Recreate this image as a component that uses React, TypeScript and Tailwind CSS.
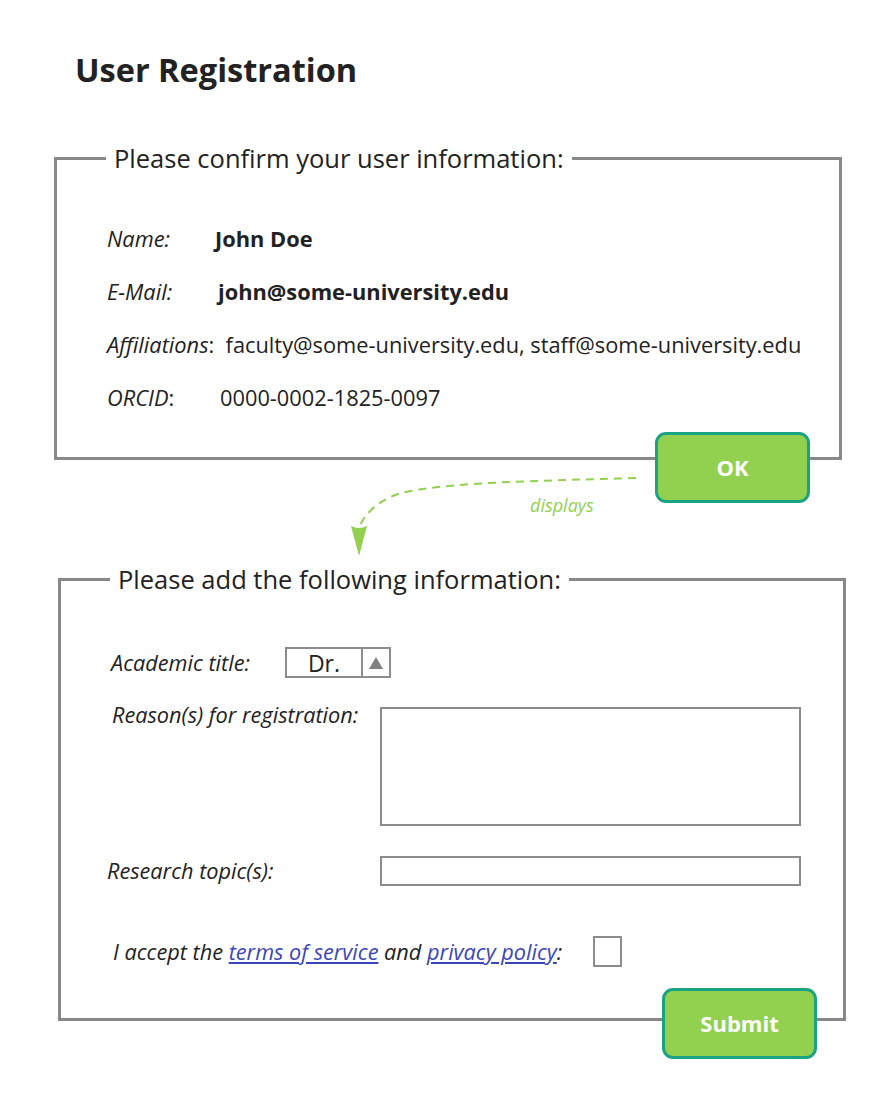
export default function App() {
  return (
    <div className="relative h-[1115px] w-[896px] bg-white font-['Open_Sans',sans-serif] text-[#222]">
      <h1 className="pl-[75px] pt-[48px] text-[32.5px] font-bold leading-[44px]">User Registration</h1>

      <fieldset className="relative ml-[54px] mt-[51px] w-[788px] border-[3px] border-[#888] px-0 pb-[32px] pt-[40px]">
        <legend className="ml-[49px] px-2 text-[25.5px] leading-[30px]">Please confirm your user information:</legend>
        <div className="pl-[50px] text-[21.8px]">
          <div className="flex h-[53px] items-center">
            <span className="w-[108px] italic">Name:</span>
            <span className="font-bold">John Doe</span>
          </div>
          <div className="flex h-[53px] items-center">
            <span className="w-[111px] italic">E-Mail:</span>
            <span className="font-bold">john@some-university.edu</span>
          </div>
          <div className="flex h-[53px] items-center whitespace-pre">
            <span className="italic">Affiliations</span>
            <span>:  faculty@some-university.edu, staff@some-university.edu</span>
          </div>
          <div className="flex h-[53px] items-center">
            <span className="w-[113px]">
              <span className="italic">ORCID</span>:
            </span>
            <span>0000-0002-1825-0097</span>
          </div>
        </div>
        <button className="absolute bottom-[-46px] right-[29px] h-[71px] w-[155px] rounded-[11px] border-[3px] border-[#19a383] bg-[#92d050] text-[22px] font-bold text-white">
          OK
        </button>
      </fieldset>

      {/* connector between the two panels */}
      <svg className="absolute left-[340px] top-[470px]" width="310" height="90" viewBox="0 0 310 90" fill="none">
        <path
          d="M296 8 C200 11 100 12 58 24 C38 31 24 44 19 58"
          stroke="#92d050"
          strokeWidth="2"
          strokeDasharray="8 6"
        />
        <path d="M11 56 Q19 60 27 56 L19 86 Z" fill="#92d050" />
      </svg>
      <span className="absolute left-[530px] top-[493px] text-[18px] italic leading-[24px] text-[#92d050]">displays</span>

      <fieldset className="relative ml-[58px] mt-[104px] w-[788px] border-[3px] border-[#888] px-0 pb-[51px] pt-[53px]">
        <legend className="ml-[49px] px-2 text-[25.5px] leading-[30px]">Please add the following information:</legend>
        <div className="text-[21.7px] italic leading-[26px]">
          <div className="flex items-center">
            <span className="ml-[50px] w-[174px]">Academic title:</span>
            <div className="flex h-[31px] w-[106px] border-2 border-[#8c8c8c] not-italic">
              <span className="flex flex-1 items-center justify-center text-[23px]">Dr.</span>
              <span className="flex w-[28px] items-center justify-center border-l-2 border-[#8c8c8c]">
                <svg width="16" height="14" viewBox="0 0 16 14">
                  <path d="M8 1 L15 13 L1 13 Z" fill="#808080" />
                </svg>
              </span>
            </div>
          </div>
          <div className="mt-[29px] flex items-start">
            <span className="ml-[51px] mt-[-5px] w-[268px]">Reason(s) for registration:</span>
            <div className="h-[119px] w-[421px] border-2 border-[#8c8c8c]" />
          </div>
          <div className="mt-[30px] flex items-center">
            <span className="ml-[46px] w-[273px]">Research topic(s):</span>
            <div className="h-[30px] w-[421px] border-2 border-[#8c8c8c]" />
          </div>
          <div className="mt-[50px] flex items-center">
            <span className="ml-[52px] w-[480px]">
              I accept the{' '}
              <a className="text-[#3b46b8] underline" href="#">
                terms of service
              </a>{' '}
              and{' '}
              <a className="text-[#3b46b8] underline" href="#">
                privacy policy
              </a>
              :
            </span>
            <div className="h-[31px] w-[29px] border-2 border-[#8c8c8c]" />
          </div>
        </div>
        <button className="absolute bottom-[-41px] right-[26px] h-[71px] w-[155px] rounded-[11px] border-[3px] border-[#19a383] bg-[#92d050] text-[22px] font-bold text-white">
          Submit
        </button>
      </fieldset>
    </div>
  );
}
